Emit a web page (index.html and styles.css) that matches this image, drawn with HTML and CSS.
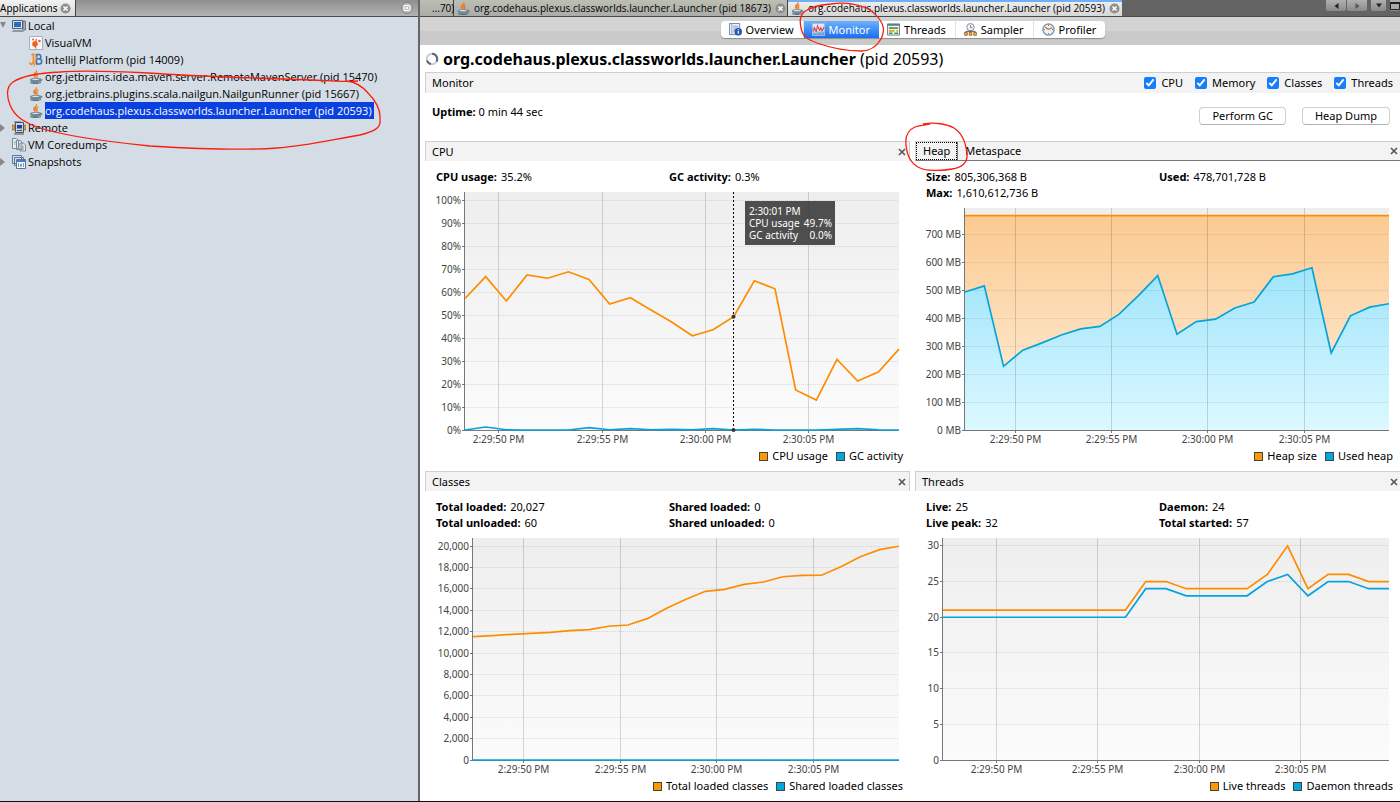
FILE: index.html
```
<!DOCTYPE html>
<html lang="en">
<head>
    <meta charset="UTF-8">
    <meta name="viewport" content="width=device-width, initial-scale=1.0">
    <title>VisualVM</title>
    <link rel="stylesheet" href="styles.css">
</head>
<body>

    <!-- Shared icons -->
    <svg class="sprite" aria-hidden="true">
        <symbol id="icon-java" viewBox="0 0 14 14">
            <path d="M1 9.5c0-1 2-1.600 6-1.600s5 .6 5 1.600-1.500 3.800-5.500 3.800S1 10.800 1 9.500z" fill="#6f8a96"/>
            <path d="M2.500 9.300c1-.8 7-.8 8 0-.8.9-7 .9-8 0z" fill="#dfe7ea"/>
            <path d="M11.500 9c2-.3 2 2-.8 2.300M1 12.600c3 1.200 8 1.200 11 0" fill="none" stroke="#4f6a78" stroke-width="1"/>
            <path d="M7.300.3c1 1.600-3.100 2.700-2.800 4.700.2 1.400 1.500 1.800 1.200 3 1.500-.9 1.100-1.900.7-2.700C5.900 4 9.200 2.500 7.300.3z" fill="#f07818" stroke="#f07818" stroke-width=".6"/>
            <path d="M9.500 3c-1.500.7-2.500 1.500-2.100 2.600.3.8.6 1.300 0 2.300C9.700 6.800 8 5.600 8.100 4.900c0-.7.9-1.100 1.400-1.900z" fill="#e0561a" stroke="#f07818" stroke-width=".5"/>
        </symbol>
        <symbol id="icon-close" viewBox="0 0 12 12">
            <circle cx="6" cy="6" r="5.500" fill="#8f8f8f"/>
            <path d="M3.800 3.800l4.400 4.400M8.200 3.800L3.800 8.200" stroke="#fff" stroke-width="1.600"/>
        </symbol>
        <symbol id="icon-x" viewBox="0 0 8 8">
            <path d="M1 1l6 6M7 1L1 7" stroke="#555" stroke-width="1.600"/>
        </symbol>
    </svg>

    <aside class="sidebar">
        <div class="sidebar-tabs">
            <div class="sidebar-tab">
                <span>Applications</span>
                <button class="icon-btn" aria-label="Close Applications"><svg width="11" height="11"><use href="#icon-close"/></svg></button>
            </div>
            <button class="icon-btn minimize" aria-label="Minimize">
                <svg width="12" height="12" viewBox="0 0 12 12">
                    <circle cx="6" cy="6" r="5.500" fill="#b9b9b9" stroke="#858585"/>
                    <path d="M3 3.500h6v5H3zM5 5.500h2v1H5z" fill="none" stroke="#fff"/>
                </svg>
            </button>
        </div>

        <ul class="tree">
            <li>
                <div class="tree-row">
                    <span class="arrow open"></span>
                    <svg class="tree-icon" viewBox="0 0 14 14">
                        <path d="M11 2h2.500v9H11z" fill="#a7adb5" stroke="#5c6672" stroke-width=".8"/>
                        <path d="M.5 1.500h10v8H.5z" fill="#dce4ec" stroke="#53606e"/>
                        <path d="M2 3h7v5H2z" fill="#1d62b4"/>
                        <path d="M2 4.500h7M2 6.500h7" stroke="#4b90dc" stroke-width=".6"/>
                        <path d="M1 11h10l1 2H0z" fill="#8f99a4"/>
                    </svg>
                    <span class="tree-label">Local</span>
                </div>
                <ul>
                    <li><div class="tree-row">
                        <svg class="tree-icon" viewBox="0 0 14 14">
                            <path d="M.5.5h13v13H.5z" fill="#f7f9fb" stroke="#9fb1c6"/>
                            <circle cx="6" cy="8" r="2.800" fill="#f2601c"/>
                            <circle cx="10.500" cy="5" r="1.300" fill="#f2601c"/>
                            <circle cx="4" cy="3.500" r="1" fill="#f2601c"/>
                            <path d="M7.500 3L6.500 6M6 10l1 2.500" stroke="#f2601c" stroke-width="1.200"/>
                        </svg>
                        <span class="tree-label">VisualVM</span>
                    </div></li>
                    <li><div class="tree-row">
                        <svg class="tree-icon" viewBox="0 0 14 14">
                            <path d="M4.500 1v7c0 4-3.500 4-3.500 1.500M2.500 1.500h3" fill="none" stroke="#f28a1c" stroke-width="1.800"/>
                            <path d="M7.500 1.500h2.300c2.800 0 2.600 4.300 0 4.500H7.500zM7.500 6h3c3 0 2.800 5 0 5h-3z" fill="none" stroke="#3a6fc0" stroke-width="1.600"/>
                            <path d="M5 13.500L8.500 2" stroke="#f28a1c" stroke-width="1"/>
                        </svg>
                        <span class="tree-label">IntelliJ Platform (pid 14009)</span>
                    </div></li>
                    <li><div class="tree-row">
                        <svg class="tree-icon"><use href="#icon-java"/></svg>
                        <span class="tree-label">org.jetbrains.idea.maven.server.RemoteMavenServer (pid 15470)</span>
                    </div></li>
                    <li><div class="tree-row">
                        <svg class="tree-icon"><use href="#icon-java"/></svg>
                        <span class="tree-label">org.jetbrains.plugins.scala.nailgun.NailgunRunner (pid 15667)</span>
                    </div></li>
                    <li><div class="tree-row selected">
                        <svg class="tree-icon"><use href="#icon-java"/></svg>
                        <span class="tree-label">org.codehaus.plexus.classworlds.launcher.Launcher (pid 20593)</span>
                    </div></li>
                </ul>
            </li>
            <li>
                <div class="tree-row">
                    <span class="arrow"></span>
                    <svg class="tree-icon" viewBox="0 0 14 14">
                        <path d="M0 4h3v5H0zM11 4h3v5h-3z" fill="#e09a3c" stroke="#6d5a3c" stroke-width=".6"/>
                        <path d="M3.500 1.500h8v10h-8z" fill="#c9d3dd" stroke="#4a5562"/>
                        <path d="M5 4h5v3.500H5z" fill="#1a3fa8"/>
                        <path d="M2 1h7M5 9.500h5M2 13h10" stroke="#4a5562"/>
                    </svg>
                    <span class="tree-label">Remote</span>
                </div>
            </li>
            <li>
                <div class="tree-row">
                    <span class="arrow none"></span>
                    <svg class="tree-icon" viewBox="0 0 14 14">
                        <path d="M.5.5h4l2 2v8h-6zM4.500 2.500h4l1.500 2v7H4.500zM8 5h3.500l2 2v6H8z" fill="#e6ecf1" stroke="#7d8b98"/>
                        <path d="M9.500 9h2.500M9.500 11h2.500M2 4h2M2 6h1.500" stroke="#7d8b98" stroke-width=".8"/>
                    </svg>
                    <span class="tree-label">VM Coredumps</span>
                </div>
            </li>
            <li>
                <div class="tree-row">
                    <span class="arrow"></span>
                    <svg class="tree-icon" viewBox="0 0 14 14">
                        <path d="M.5.5h9v8h-9zM2.500 2.500h9v8h-9z" fill="#d6e2f0" stroke="#56749c"/>
                        <path d="M4.500 4.500h9v9h-9z" fill="#f4f8fc" stroke="#56749c"/>
                        <path d="M5 5h8v2H5z" fill="#4a7cc0"/>
                        <path d="M6.500 8v4M8.500 9v3M9.500 8.500v3M11.500 8v4" stroke="#7292ba" stroke-width=".9"/>
                    </svg>
                    <span class="tree-label">Snapshots</span>
                </div>
            </li>
        </ul>

        <svg class="mark mark-tree" viewBox="0 0 384 82" aria-hidden="true">
            <path d="M358 13C344 14 333 13 312 12C250 10 190 8 148 5C110 3 84 2 60 4C38 5 22 8 13 14C6 19 7 29 10 37C14 47 22 54 40 60C68 69 110 74 150 78C200 81 250 82 277 80C305 78 335 71 360 67C376 63 381 59 380 52C381 42 375 32 368 25C362 18 356 14 347 13"/>
        </svg>
    </aside>

    <main class="main">
        <nav class="doc-tabs">
            <button class="doc-tab clipped">...70)</button>
            <div class="doc-tab">
                <svg class="tab-icon"><use href="#icon-java"/></svg>
                <span>org.codehaus.plexus.classworlds.launcher.Launcher (pid 18673)</span>
                <button class="icon-btn" aria-label="Close tab"><svg width="11" height="11"><use href="#icon-close"/></svg></button>
            </div>
            <div class="doc-tab active">
                <svg class="tab-icon"><use href="#icon-java"/></svg>
                <span>org.codehaus.plexus.classworlds.launcher.Launcher (pid 20593)</span>
                <button class="icon-btn" aria-label="Close tab"><svg width="11" height="11"><use href="#icon-close"/></svg></button>
            </div>
            <div class="tab-nav">
                <button aria-label="Previous tab"><svg width="5" height="6" viewBox="0 0 5 6"><path d="M4.500 0v6L.5 3z" fill="#222"/></svg></button>
                <button aria-label="Next tab"><svg width="5" height="6" viewBox="0 0 5 6"><path d="M.5 0v6l4-3z" fill="#555"/></svg></button>
                <button class="narrow" aria-label="Tab list"><svg width="6" height="5" viewBox="0 0 6 5"><path d="M0 .5h6l-3 4z" fill="#222"/></svg></button>
                <button class="cut" aria-label="Maximize"><svg width="10" height="8" viewBox="0 0 10 8"><path d="M.5 1h9v6.500h-9z" fill="#aaa" stroke="#222"/><path d="M0 1h10" stroke="#222" stroke-width="2"/></svg></button>
            </div>
        </nav>

        <div class="toolbar">
            <div class="segments">
                <button class="segment">
                    <svg class="segment-icon" viewBox="0 0 14 14">
                        <path d="M.5.5h11v12H.5z" fill="#eaf0f6" stroke="#68839e"/>
                        <path d="M3 1v11M4.500 3.500H10M4.500 5.500H10M4.500 7.500H8M4.500 9.500H7" stroke="#8aa2ba"/>
                        <circle cx="10" cy="9.500" r="4" fill="#2456b4"/>
                        <path d="M10 8.700v3M10 6.700v1.200" stroke="#fff" stroke-width="1.300"/>
                    </svg>
                    Overview
                </button>
                <div class="segment-wrap">
                    <button class="segment active">
                        <svg class="segment-icon" viewBox="0 0 14 14">
                            <path d="M.5.500h13v13H.5z" fill="#dcecf9" stroke="#a3bdd8"/>
                            <path d="M1 9h12v4H1z" fill="#6ea4dc"/>
                            <path d="M1 9l1.500-4 2 4 1.500-6 2 5 1.500-3L11 9l2-5" fill="none" stroke="#e04444" stroke-width="1.200"/>
                            <path d="M1 11l2-1 2 1 3-2 2 1 3-1" fill="none" stroke="#d8ecfc" stroke-width=".8"/>
                        </svg>
                        Monitor
                    </button>
                    <svg class="mark mark-monitor" viewBox="0 0 88 52" aria-hidden="true">
                        <path d="M72 8C60 3 46 1 34 3C22 4 12 7 7 11C2 16 3 21 4 27C6 36 10 38 20 42C34 47 48 50 64 50C73 50 80 45 84 38C87 31 88 27 83 19C79 13 75 10 68 6"/>
                    </svg>
                </div>
                <button class="segment">
                    <svg class="segment-icon" viewBox="0 0 14 14">
                        <path d="M.5 1h13v12H.5z" fill="#f2f6fa" stroke="#64798e"/>
                        <path d="M0 2h14" stroke="#64798e" stroke-width="2"/>
                        <path d="M2 5.500h10" stroke="#38a038" stroke-width="1.800"/>
                        <path d="M2 8.500h6M10 8.500h2" stroke="#e5a020" stroke-width="1.800"/>
                        <path d="M2 11h4M8 11h4" stroke="#38a038" stroke-width="1.600"/>
                    </svg>
                    Threads
                </button>
                <button class="segment">
                    <svg class="segment-icon" viewBox="0 0 14 14">
                        <circle cx="7" cy="4.500" r="4" fill="#e9f1f8" stroke="#7790a8"/>
                        <path d="M7 2v3h2" fill="none" stroke="#e07020"/>
                        <path d="M7 8v2M2 11V9h10v2" fill="none" stroke="#555"/>
                        <path d="M.7 10.200h2.800v3H.7zM5.600 10.200h2.800v3H5.600zM10.500 10.200h2.800v3h-2.800z" fill="#f5b860" stroke="#9c6420"/>
                    </svg>
                    Sampler
                </button>
                <button class="segment">
                    <svg class="segment-icon" viewBox="0 0 14 14">
                        <circle cx="7" cy="7" r="6" fill="#e8f3fb" stroke="#8397aa" stroke-width="1.500"/>
                        <path d="M7 7L3.500 4.500M7 7l4-2" stroke="#e0702a" stroke-width="1.500"/>
                        <path d="M7 2v1M7 11v1M2 7h1M11 7h1" stroke="#456"/>
                    </svg>
                    Profiler
                </button>
            </div>
        </div>

        <h1 class="title">
            <svg class="spinner" viewBox="0 0 14 14">
                <circle cx="7" cy="7" r="5.200" fill="none" stroke="#c9cdd6" stroke-width="2"/>
                <path d="M7 1.800a5.200 5.200 0 0 1 4.500 7.800M6 12.100A5.200 5.200 0 0 1 2 8.500" fill="none" stroke="#5c6478" stroke-width="2"/>
            </svg>
            <span><strong>org.codehaus.plexus.classworlds.launcher.Launcher</strong> (pid 20593)</span>
        </h1>

        <div class="section-bar">
            <h2>Monitor</h2>
            <div class="checks">
                <label><input type="checkbox" checked>CPU</label>
                <label><input type="checkbox" checked>Memory</label>
                <label><input type="checkbox" checked>Classes</label>
                <label><input type="checkbox" checked>Threads</label>
            </div>
        </div>

        <div class="summary">
            <p><strong>Uptime:</strong> 0 min 44 sec</p>
            <div class="actions">
                <button class="btn">Perform GC</button>
                <button class="btn">Heap Dump</button>
            </div>
        </div>

        <div class="panels">
            <section class="panel">
                <header class="panel-header">
                    <h2>CPU</h2>
                    <button class="icon-btn" aria-label="Close CPU"><svg width="8" height="8"><use href="#icon-x"/></svg></button>
                </header>
                <dl class="stats">
                    <div><dt>CPU usage:</dt><dd>35.2%</dd></div>
                    <div><dt>GC activity:</dt><dd>0.3%</dd></div>
                </dl>
                <svg class="chart" id="chart-cpu"></svg>
                <ul class="legend">
                    <li class="orange">CPU usage</li>
                    <li class="blue">GC activity</li>
                </ul>
            </section>

            <section class="panel">
                <header class="panel-header tabbed">
                    <div class="heap-wrap">
                        <button class="panel-tab active">Heap</button>
                        <svg class="mark mark-heap" viewBox="0 0 66 50" aria-hidden="true">
                            <path d="M20 3C32 1 44 3 51 7C59 12 63 23 64 33C65 42 58 47 49 48C38 50 24 50 17 47C8 43 4 35 3 24C2 15 5 9 12 6C17 4 22 4 27 3"/>
                        </svg>
                    </div>
                    <button class="panel-tab">Metaspace</button>
                    <button class="icon-btn" aria-label="Close Heap"><svg width="8" height="8"><use href="#icon-x"/></svg></button>
                </header>
                <dl class="stats">
                    <div><dt>Size:</dt><dd>805,306,368 B</dd></div>
                    <div><dt>Used:</dt><dd>478,701,728 B</dd></div>
                    <div><dt>Max:</dt><dd>1,610,612,736 B</dd></div>
                </dl>
                <svg class="chart" id="chart-heap"></svg>
                <ul class="legend">
                    <li class="orange">Heap size</li>
                    <li class="blue">Used heap</li>
                </ul>
            </section>

            <section class="panel">
                <header class="panel-header">
                    <h2>Classes</h2>
                    <button class="icon-btn" aria-label="Close Classes"><svg width="8" height="8"><use href="#icon-x"/></svg></button>
                </header>
                <dl class="stats">
                    <div><dt>Total loaded:</dt><dd>20,027</dd></div>
                    <div><dt>Shared loaded:</dt><dd>0</dd></div>
                    <div><dt>Total unloaded:</dt><dd>60</dd></div>
                    <div><dt>Shared unloaded:</dt><dd>0</dd></div>
                </dl>
                <svg class="chart" id="chart-classes"></svg>
                <ul class="legend">
                    <li class="orange">Total loaded classes</li>
                    <li class="blue">Shared loaded classes</li>
                </ul>
            </section>

            <section class="panel">
                <header class="panel-header">
                    <h2>Threads</h2>
                    <button class="icon-btn" aria-label="Close Threads"><svg width="8" height="8"><use href="#icon-x"/></svg></button>
                </header>
                <dl class="stats">
                    <div><dt>Live:</dt><dd>25</dd></div>
                    <div><dt>Daemon:</dt><dd>24</dd></div>
                    <div><dt>Live peak:</dt><dd>32</dd></div>
                    <div><dt>Total started:</dt><dd>57</dd></div>
                </dl>
                <svg class="chart" id="chart-threads"></svg>
                <ul class="legend">
                    <li class="orange">Live threads</li>
                    <li class="blue">Daemon threads</li>
                </ul>
            </section>
        </div>
    </main>

    <script src="charts.js"></script>
</body>
</html>
```

FILE: styles.css
```
:root {
    --side-bg: #d4dde6;
    --bar-bg: #f3f3f3;
    --line: #cfcfcf;
    --select: #0a3fe0;
    --orange: #ff9900;
    --blue: #00a8e0;
    --mark: #fa1e0e;
}

*, *::before, *::after {
    box-sizing: border-box;
    margin: 0;
    padding: 0;
}

body {
    display: grid;
    grid-template-columns: 30% 1fr;
    min-height: 100vh;
    background: #fff;
    color: #000;
    font-family: 'Noto Sans', 'Open Sans', sans-serif;
    font-size: 11px;
    line-height: 16px;
    border-bottom: 1px solid #111;
}

button {
    font: inherit;
    color: inherit;
    border: none;
    background: none;
    white-space: nowrap;
}

ul {
    list-style: none;
}

h1, h2 {
    font-size: 11px;
    font-weight: 400;
}

.sprite {
    position: absolute;
    width: 0;
    height: 0;
}

.icon-btn {
    display: flex;
    flex: none;
}

/* Hand-drawn marks over the window */
.mark {
    position: absolute;
    z-index: 5;
    pointer-events: none;
    fill: none;
    stroke: var(--mark);
    stroke-width: 1.3;
}

/* Sidebar */
.sidebar {
    position: relative;
    background: var(--side-bg);
    border-right: 2px solid #666;
}

.sidebar-tabs {
    display: flex;
    align-items: stretch;
    justify-content: space-between;
    height: 17px;
    background: linear-gradient(#8f8f8f, #b4b4b4);
    border-bottom: 1px solid #4a4a4a;
    font-size: 10px;
    line-height: 16px;
}

.sidebar-tab {
    display: flex;
    align-items: center;
    gap: 3px;
    padding-right: 4px;
    background: linear-gradient(#f2f2f2, #d9d9d9);
    border-right: 1px solid #444;
}

.minimize {
    align-items: center;
    padding-right: 5px;
}

.tree {
    font-family: 'Open Sans', 'Noto Sans', sans-serif;
}

.tree-row {
    display: flex;
    align-items: center;
    height: 17px;
}

.tree ul .tree-row {
    padding-left: 29px;
}

.tree-icon {
    flex: none;
    width: 14px;
    height: 14px;
    margin-right: 2px;
}

.tree-label {
    line-height: 17px;
    padding-right: 2px;
    white-space: nowrap;
}

.selected .tree-label {
    background: var(--select);
    color: #fff;
}

.arrow {
    flex: none;
    width: 12px;
    height: 8px;
}

.arrow::before {
    content: "";
    display: block;
    border-left: 5px solid #888;
    border-top: 4px solid transparent;
    border-bottom: 4px solid transparent;
    width: 0;
}

.arrow.open::before {
    border-top: 6px solid #888;
    border-left: 3px solid transparent;
    border-right: 3px solid transparent;
    border-bottom: none;
}

.arrow.none::before {
    display: none;
}

.mark-tree {
    left: 0;
    top: 68px;
    width: 384px;
    height: 82px;
}

/* Document tabs */
.main {
    display: flex;
    flex-direction: column;
    min-width: 0;
}

.doc-tabs {
    display: flex;
    height: 17px;
    background: #646464;
    border-bottom: 1px solid #4a4a4a;
    font-family: 'Open Sans', 'Noto Sans', sans-serif;
    font-size: 10px;
    line-height: 16px;
    white-space: nowrap;
}

.doc-tab {
    display: flex;
    align-items: center;
    justify-content: space-between;
    gap: 4px;
    width: 334px;
    padding: 0 4px 0 3px;
    background: linear-gradient(#bdbfb4, #aaaca8);
    border-right: 1px solid #444;
}

.doc-tab > span {
    flex: 1;
}

.doc-tab.clipped {
    width: 34px;
    padding: 0 0 0 12px;
}

.doc-tab.active {
    background: linear-gradient(#f0f0f0, #d6d6d6);
    box-shadow: inset 0 2px 0 #6fb0f5;
    border-right: none;
}

.tab-icon {
    flex: none;
    width: 13px;
    height: 13px;
}

.tab-nav {
    display: flex;
    gap: 1px;
    margin-left: auto;
    height: 11px;
}

.tab-nav button {
    display: flex;
    align-items: center;
    justify-content: center;
    width: 20px;
    background: linear-gradient(#b0b0b0, #8a8a8a);
    border-radius: 0 0 2px 2px;
}

.tab-nav .narrow {
    width: 15px;
    margin: 0 3px;
}

.tab-nav .cut {
    width: 10px;
}

/* View switcher */
.toolbar {
    display: flex;
    justify-content: center;
    padding: 4px 0 7px 6px;
    background: linear-gradient(#d3d3d3 50%, #cacaca 50%);
}

.segments {
    display: flex;
    background: #fff;
    border-radius: 4px;
    box-shadow: 0 1px 1px rgba(0, 0, 0, 0.3);
}

.segment-wrap {
    position: relative;
}

.segment {
    display: flex;
    align-items: center;
    gap: 4px;
    height: 17px;
    padding: 0 9px 0 8px;
    border-right: 1px solid #e2e2e2;
    font-size: 11px;
}

.segment:last-child {
    border-right: none;
}

.segment.active {
    background: linear-gradient(#6db1fb, #1a6df2);
    border: none;
    color: #fff;
}

.segment-icon {
    flex: none;
    width: 13px;
    height: 13px;
}

.mark-monitor {
    left: -7px;
    top: -20px;
    width: 88px;
    height: 52px;
}

/* Title and summary */
.title {
    display: flex;
    align-items: center;
    gap: 4px;
    height: 27px;
    padding-left: 5px;
    font-size: 16px;
    white-space: nowrap;
}

.spinner {
    width: 14px;
    height: 14px;
}

.section-bar {
    display: flex;
    align-items: center;
    justify-content: space-between;
    height: 21px;
    margin-left: 5px;
    padding: 0 7px 0 6px;
    background: var(--bar-bg);
    border-top: 1px solid var(--line);
    border-left: 1px solid var(--line);
}

.checks {
    display: flex;
    gap: 12px;
}

.checks label {
    display: flex;
    align-items: center;
    gap: 5px;
}

.checks input {
    width: 12px;
    height: 12px;
    accent-color: #147efb;
}

.summary {
    display: flex;
    align-items: flex-start;
    justify-content: space-between;
    height: 48px;
    padding: 11px 10px 0 12px;
}

.actions {
    display: flex;
    gap: 16px;
    padding-top: 3px;
}

.btn {
    height: 18px;
    padding: 0 12px;
    background: #fff;
    border: 1px solid #d0d0d0;
    border-bottom-color: #b0b0b0;
    border-radius: 4px;
}

/* Panels */
.panels {
    flex: 1;
    display: grid;
    grid-template-columns: 1fr 1fr;
    grid-auto-rows: 1fr;
    column-gap: 5px;
    padding-left: 5px;
}

.panel {
    display: flex;
    flex-direction: column;
    min-width: 0;
}

.panel-header {
    display: flex;
    align-items: center;
    justify-content: space-between;
    height: 20px;
    padding: 0 3px 0 6px;
    background: var(--bar-bg);
    border: 1px solid var(--line);
    border-bottom: none;
}

.panel:nth-child(even) .panel-header {
    padding-right: 2px;
    border-right: none;
}

.panel-header.tabbed {
    justify-content: flex-start;
    padding-left: 0;
    border-bottom: 1px solid #777;
}

.tabbed .icon-btn {
    margin-left: auto;
}

.heap-wrap {
    position: relative;
    border-right: 1px solid #777;
}

.panel-tab {
    display: block;
    height: 18px;
    padding: 0 7px;
}

.panel-tab.active {
    outline: 1px dotted #000;
    outline-offset: -1px;
}

.mark-heap {
    left: -13px;
    top: -21px;
    width: 66px;
    height: 50px;
}

.stats {
    display: grid;
    grid-template-columns: 233px 1fr;
    padding: 8px 0 0 11px;
}

.stats div {
    display: flex;
    gap: 4px;
}

.stats dt {
    font-weight: 700;
}

.stats div:nth-child(odd) {
    grid-column: 1;
}

.chart {
    flex: 1 1 0;
    width: 100%;
    min-height: 160px;
}

.legend {
    display: flex;
    justify-content: flex-end;
    gap: 8px;
    padding: 0 7px 7px 0;
}

.legend li {
    display: flex;
    align-items: center;
    gap: 4px;
}

.legend li::before {
    content: "";
    width: 9px;
    height: 9px;
    border: 1px solid #444;
}

.legend .orange::before { background: var(--orange); }
.legend .blue::before { background: var(--blue); }

/* Chart parts */
.chart text {
    font-size: 10px;
    fill: #444;
}

.chart .grid-v { stroke: #000; stroke-opacity: 0.15; }
.chart .grid-h { stroke: #000; stroke-opacity: 0.12; stroke-dasharray: 1 1; }
.chart .axis { stroke: #777; }
.chart .line { fill: none; stroke-width: 1.7; }
.chart .line.orange { stroke: #ff8c00; }
.chart .line.blue { stroke: #06a2dc; }
.chart .cursor { stroke: #000; stroke-dasharray: 2 2; }
.chart .tip-box { fill: #3c3c3c; fill-opacity: 0.9; }
.chart .tip-text { fill: #fff; }
```

FILE: charts.js
```
const charts = [
    {
        id: 'chart-cpu', left: 40, max: 103.5, step: 10, top: 100, firstTick: 1.63,
        format: v => v + '%',
        series: [
            { color: 'blue', data: [0, 1.3, 0.1, 0, 0, 0, 1, 0.1, 0.6, 0.1, 0.3, 0.1, 0.6, 0, 0.3, 0, 0, 0, 0.3, 0.6, 0.1, 0] },
            { color: 'orange', data: [57.2, 66.7, 56.1, 67.4, 66, 68.8, 65.5, 54.8, 57.5, 52.2, 47, 41, 43.6, 49.3, 64.9, 61.4, 17.4, 13, 30.7, 21.3, 25.2, 35.2] }
        ],
        tip: { index: 13, time: '2:30:01 PM', rows: [['CPU usage', '49.7%'], ['GC activity', '0.0%']] }
    },
    {
        id: 'chart-heap', left: 50, max: 795, step: 100, top: 700, firstTick: 2.6, fill: true,
        format: v => v + ' MB',
        series: [
            { color: 'orange', data: Array(23).fill(768) },
            { color: 'blue', data: [494, 516, 228, 286, 312, 340, 362, 371, 415, 481, 553, 343, 388, 397, 437, 458, 549, 559, 581, 276, 409, 440, 452] }
        ]
    },
    {
        id: 'chart-classes', left: 48, max: 20750, step: 2000, top: 20000, firstTick: 2.6,
        format: v => v.toLocaleString('en-US'),
        series: [
            { color: 'orange', data: [11530, 11620, 11750, 11840, 11930, 12090, 12180, 12500, 12620, 13210, 14180, 15020, 15770, 15950, 16420, 16640, 17130, 17260, 17270, 18070, 19000, 19660, 19980] },
            { color: 'blue', data: Array(23).fill(0) }
        ]
    },
    {
        id: 'chart-threads', left: 28, max: 31.1, step: 5, top: 30, firstTick: 2.64,
        format: v => v,
        series: [
            { color: 'orange', data: [21, 21, 21, 21, 21, 21, 21, 21, 21, 21, 25, 25, 24, 24, 24, 24, 26, 30, 24, 26, 26, 25, 25] },
            { color: 'blue', data: [20, 20, 20, 20, 20, 20, 20, 20, 20, 20, 24, 24, 23, 23, 23, 23, 25, 26, 23, 25, 25, 24, 24] }
        ]
    }
];

const times = ['2:29:50 PM', '2:29:55 PM', '2:30:00 PM', '2:30:05 PM'];
const pad = { top: 7, right: 11, bottom: 18 };

function line(x1, y1, x2, y2, cls) {
    return `<line x1="${x1}" y1="${y1}" x2="${x2}" y2="${y2}" class="${cls}"/>`;
}

// snap to the pixel centre so 1px lines stay sharp
function snap(v) {
    return Math.floor(v) + 0.5;
}

function draw(chart) {
    const svg = document.getElementById(chart.id);
    const box = svg.getBoundingClientRect();
    const right = box.width - pad.right;
    const bottom = box.height - pad.bottom;
    const width = right - chart.left;
    const height = bottom - pad.top;
    const count = chart.series[0].data.length - 1;
    const x = i => chart.left + width * i / count;
    const y = v => bottom - height * v / chart.max;

    let out = `<defs>
        <linearGradient id="${chart.id}-bg" x1="0" y1="0" x2="0" y2="1"><stop offset="0" stop-color="#eeeeee"/><stop offset="1" stop-color="#fbfbfb"/></linearGradient>
        <linearGradient id="${chart.id}-orange" x1="0" y1="0" x2="0" y2="1"><stop offset="0" stop-color="#fbca90"/><stop offset="1" stop-color="#fff0df"/></linearGradient>
        <linearGradient id="${chart.id}-blue" x1="0" y1="0" x2="0" y2="1"><stop offset="0" stop-color="#9fe5fb"/><stop offset="1" stop-color="#dcf8ff"/></linearGradient>
    </defs>`;
    out += `<rect x="${chart.left}" y="${pad.top}" width="${width}" height="${height}" fill="url(#${chart.id}-bg)"/>`;

    if (chart.fill) {
        chart.series.forEach(s => {
            const pts = s.data.map((v, i) => `${x(i)},${y(v)}`).join(' ');
            out += `<polygon points="${chart.left},${bottom} ${pts} ${right},${bottom}" fill="url(#${chart.id}-${s.color})"/>`;
        });
    }

    for (let v = 0; v <= chart.top; v += chart.step) {
        const gy = snap(y(v));
        out += line(chart.left, gy, right, gy, 'grid-h');
        out += line(chart.left - 3, gy, chart.left, gy, 'axis');
        out += `<text x="${chart.left - 4}" y="${gy + 3.5}" text-anchor="end">${chart.format(v)}</text>`;
    }

    times.forEach((label, i) => {
        const gx = snap(x(chart.firstTick + i * 5));
        out += line(gx, pad.top, gx, bottom, 'grid-v');
        out += line(gx, bottom, gx, bottom + 3, 'axis');
        out += `<text x="${gx}" y="${bottom + 13}" text-anchor="middle">${label}</text>`;
    });

    out += line(chart.left - 0.5, pad.top, chart.left - 0.5, bottom + 1, 'axis');
    out += line(chart.left, bottom + 0.5, right, bottom + 0.5, 'axis');

    chart.series.forEach(s => {
        const pts = s.data.map((v, i) => `${x(i)},${y(v)}`).join(' ');
        out += `<polyline points="${pts}" class="line ${s.color}"/>`;
    });

    if (chart.tip) {
        const tx = snap(x(chart.tip.index));
        out += line(tx, pad.top, tx, bottom, 'cursor');
        chart.series.forEach(s => {
            out += `<circle cx="${tx}" cy="${y(s.data[chart.tip.index])}" r="2" fill="#333"/>`;
        });
        const bx = tx + 11.5;
        const by = pad.top + 9;
        out += `<rect x="${bx}" y="${by}" width="90" height="44" class="tip-box"/>`;
        out += `<text x="${bx + 4}" y="${by + 14}" class="tip-text">${chart.tip.time}</text>`;
        chart.tip.rows.forEach((row, i) => {
            const ry = by + 26 + i * 12;
            out += `<text x="${bx + 4}" y="${ry}" class="tip-text">${row[0]}</text>`;
            out += `<text x="${bx + 87}" y="${ry}" text-anchor="end" class="tip-text">${row[1]}</text>`;
        });
    }

    svg.innerHTML = out;
}

function drawAll() {
    charts.forEach(draw);
}

window.addEventListener('resize', drawAll);
drawAll();
```
